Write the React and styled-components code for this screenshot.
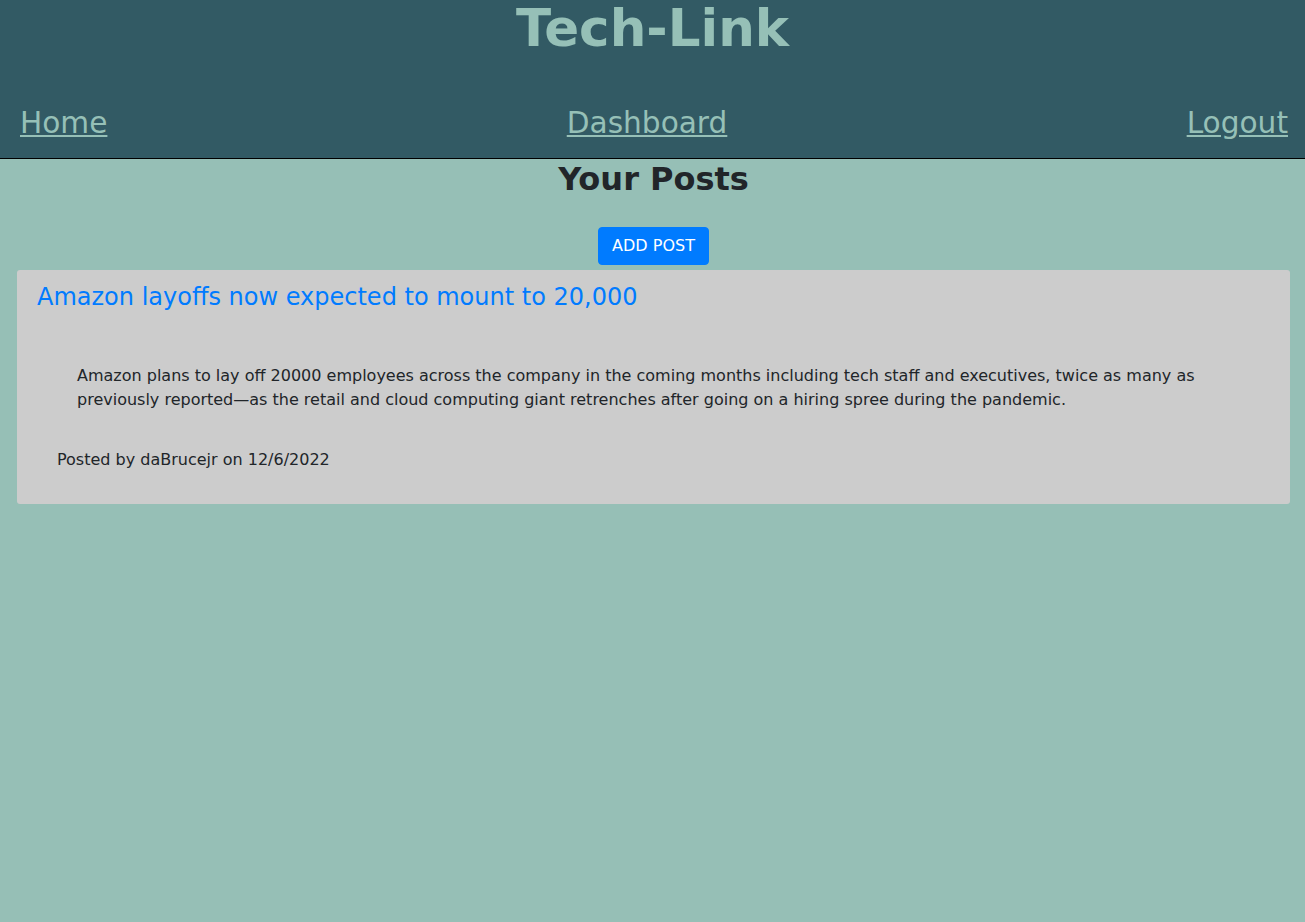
import React from "react";
import styled, { createGlobalStyle } from "styled-components";

const GlobalStyle = createGlobalStyle`
  html, body {
    margin: 0;
    padding: 0;
    background: #96bfb6;
    font-family: "DejaVu Sans", Verdana, sans-serif;
    color: #212529;
  }
`;

const Header = styled.header`
  background: #325a64;
  border-bottom: 1px solid #000;
  padding-bottom: 18px;
`;

const Brand = styled.h1`
  margin: 0;
  text-align: center;
  font-size: 51.5px;
  font-weight: bold;
  color: #96c0b7;
  line-height: 1.1;
`;

const Nav = styled.nav`
  display: flex;
  justify-content: space-between;
  align-items: center;
  padding: 0 17px 0 20px;
  margin-top: 49px;
`;

const NavLink = styled.a`
  color: #96c0b7;
  font-size: 29.6px;
  text-decoration: underline;
  cursor: pointer;
`;

const Main = styled.main`
  display: flex;
  flex-direction: column;
  align-items: center;
  padding: 0 15px 0 17px;
`;

const PageTitle = styled.h2`
  margin: 1px 0 0;
  font-size: 32px;
  font-weight: bold;
  color: #212529;
`;

const AddButton = styled.button`
  margin-top: 29px;
  font-family: "DejaVu Sans", Verdana, sans-serif;
  font-size: 16px;
  line-height: 1.5;
  color: #fff;
  background: #007bff;
  border: 1px solid #007bff;
  border-radius: 4px;
  padding: 6px 13px;
  cursor: pointer;
`;

const Card = styled.article`
  align-self: stretch;
  margin-top: 5px;
  background: #cccccc;
  border-radius: 3px;
  padding: 13px 20px 32px;
`;

const PostTitle = styled.a`
  display: block;
  color: #007bff;
  font-size: 24px;
  text-decoration: none;
`;

const PostBody = styled.p`
  margin: 53px 0 0;
  padding: 0 40px;
  font-size: 16px;
  line-height: 1.5;
`;

const PostMeta = styled.p`
  margin: 36px 0 0;
  padding: 0 20px;
  font-size: 16px;
  line-height: 1.5;
`;

export default function App() {
  return (
    <>
      <GlobalStyle />
      <Header>
        <Brand>Tech-Link</Brand>
        <Nav>
          <NavLink>Home</NavLink>
          <NavLink>Dashboard</NavLink>
          <NavLink>Logout</NavLink>
        </Nav>
      </Header>
      <Main>
        <PageTitle>Your Posts</PageTitle>
        <AddButton>ADD POST</AddButton>
        <Card>
          <PostTitle>Amazon layoffs now expected to mount to 20,000</PostTitle>
          <PostBody>
            Amazon plans to lay off 20000 employees across the company in the coming months including tech staff and executives, twice as many as previously reported—as the retail and cloud computing giant retrenches after going on a hiring spree during the pandemic.
          </PostBody>
          <PostMeta>Posted by daBrucejr on 12/6/2022</PostMeta>
        </Card>
      </Main>
    </>
  );
}
